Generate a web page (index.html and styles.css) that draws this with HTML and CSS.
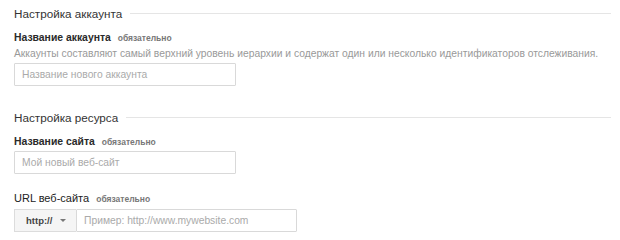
FILE: index.html
```html
<!DOCTYPE html>
<html lang="ru">
<head>
  <meta charset="UTF-8">
  <title>Настройка аккаунта</title>
  <link rel="stylesheet" href="styles.css">
</head>
<body>
  <div class="section">
    <div class="section-title"><span>Настройка аккаунта</span></div>

    <div class="field">
      <label class="field-label">Название аккаунта <span class="req">обязательно</span></label>
      <div class="hint">Аккаунты составляют самый верхний уровень иерархии и содержат один или несколько идентификаторов отслеживания.</div>
      <input class="text-input" type="text" placeholder="Название нового аккаунта">
    </div>
  </div>

  <div class="section">
    <div class="section-title"><span>Настройка ресурса</span></div>

    <div class="field">
      <label class="field-label">Название сайта <span class="req">обязательно</span></label>
      <input class="text-input" type="text" placeholder="Мой новый веб-сайт">
    </div>

    <div class="field">
      <label class="field-label light">URL веб-сайта <span class="req">обязательно</span></label>
      <div class="url-group">
        <div class="proto">http:// <span class="caret"></span></div>
        <input class="url-input" type="text" placeholder="Пример: http://www.mywebsite.com">
      </div>
    </div>
  </div>
</body>
</html>
```

FILE: styles.css
```css
body {
  margin: 0;
  padding: 5px 9px 0 14px;
  font-family: "Liberation Sans", Arial, sans-serif;
  color: #444;
  background: #fff;
}

.section {
  margin-bottom: 23px;
}

.section:last-child {
  margin-bottom: 0;
}

.section-title {
  display: flex;
  align-items: center;
  gap: 8px;
  font-size: 11.7px;
  color: #333;
  height: 16px;
}

.section-title::after {
  content: "";
  flex: 1;
  border-top: 1px solid #e5e5e5;
}

.field {
  margin-top: 9px;
}

.field + .field {
  margin-top: 16px;
}

.field-label {
  display: block;
  font-size: 10.4px;
  font-weight: bold;
  color: #2a2a2a;
  line-height: 16px;
}

.field-label.light {
  font-weight: normal;
  color: #222;
  font-size: 11px;
}

.req {
  font-size: 8.5px;
  font-weight: bold;
  color: #777;
  margin-left: 4px;
}

.hint {
  font-size: 10.3px;
  color: #999;
  line-height: 16px;
}

.text-input,
.url-input {
  display: block;
  box-sizing: border-box;
  height: 23px;
  margin: 1px 0 0;
  padding: 0 7px;
  border: 1px solid #d9d9d9;
  border-radius: 1px;
  font-family: inherit;
  font-size: 10.3px;
  color: #333;
  outline: none;
}

.text-input {
  width: 222px;
}

.text-input::placeholder,
.url-input::placeholder {
  color: #aaa;
}

.url-group {
  display: flex;
  margin-top: 2px;
}

.proto {
  display: flex;
  align-items: center;
  box-sizing: border-box;
  width: 62px;
  height: 23px;
  padding-left: 11px;
  background: #f5f5f5;
  border: 1px solid #dcdcdc;
  border-right: none;
  font-size: 9.5px;
  font-weight: bold;
  color: #444;
}

.caret {
  margin-left: 8px;
  border-left: 3px solid transparent;
  border-right: 3px solid transparent;
  border-top: 3px solid #777;
}

.url-input {
  margin: 0;
  width: 221px;
}
```
